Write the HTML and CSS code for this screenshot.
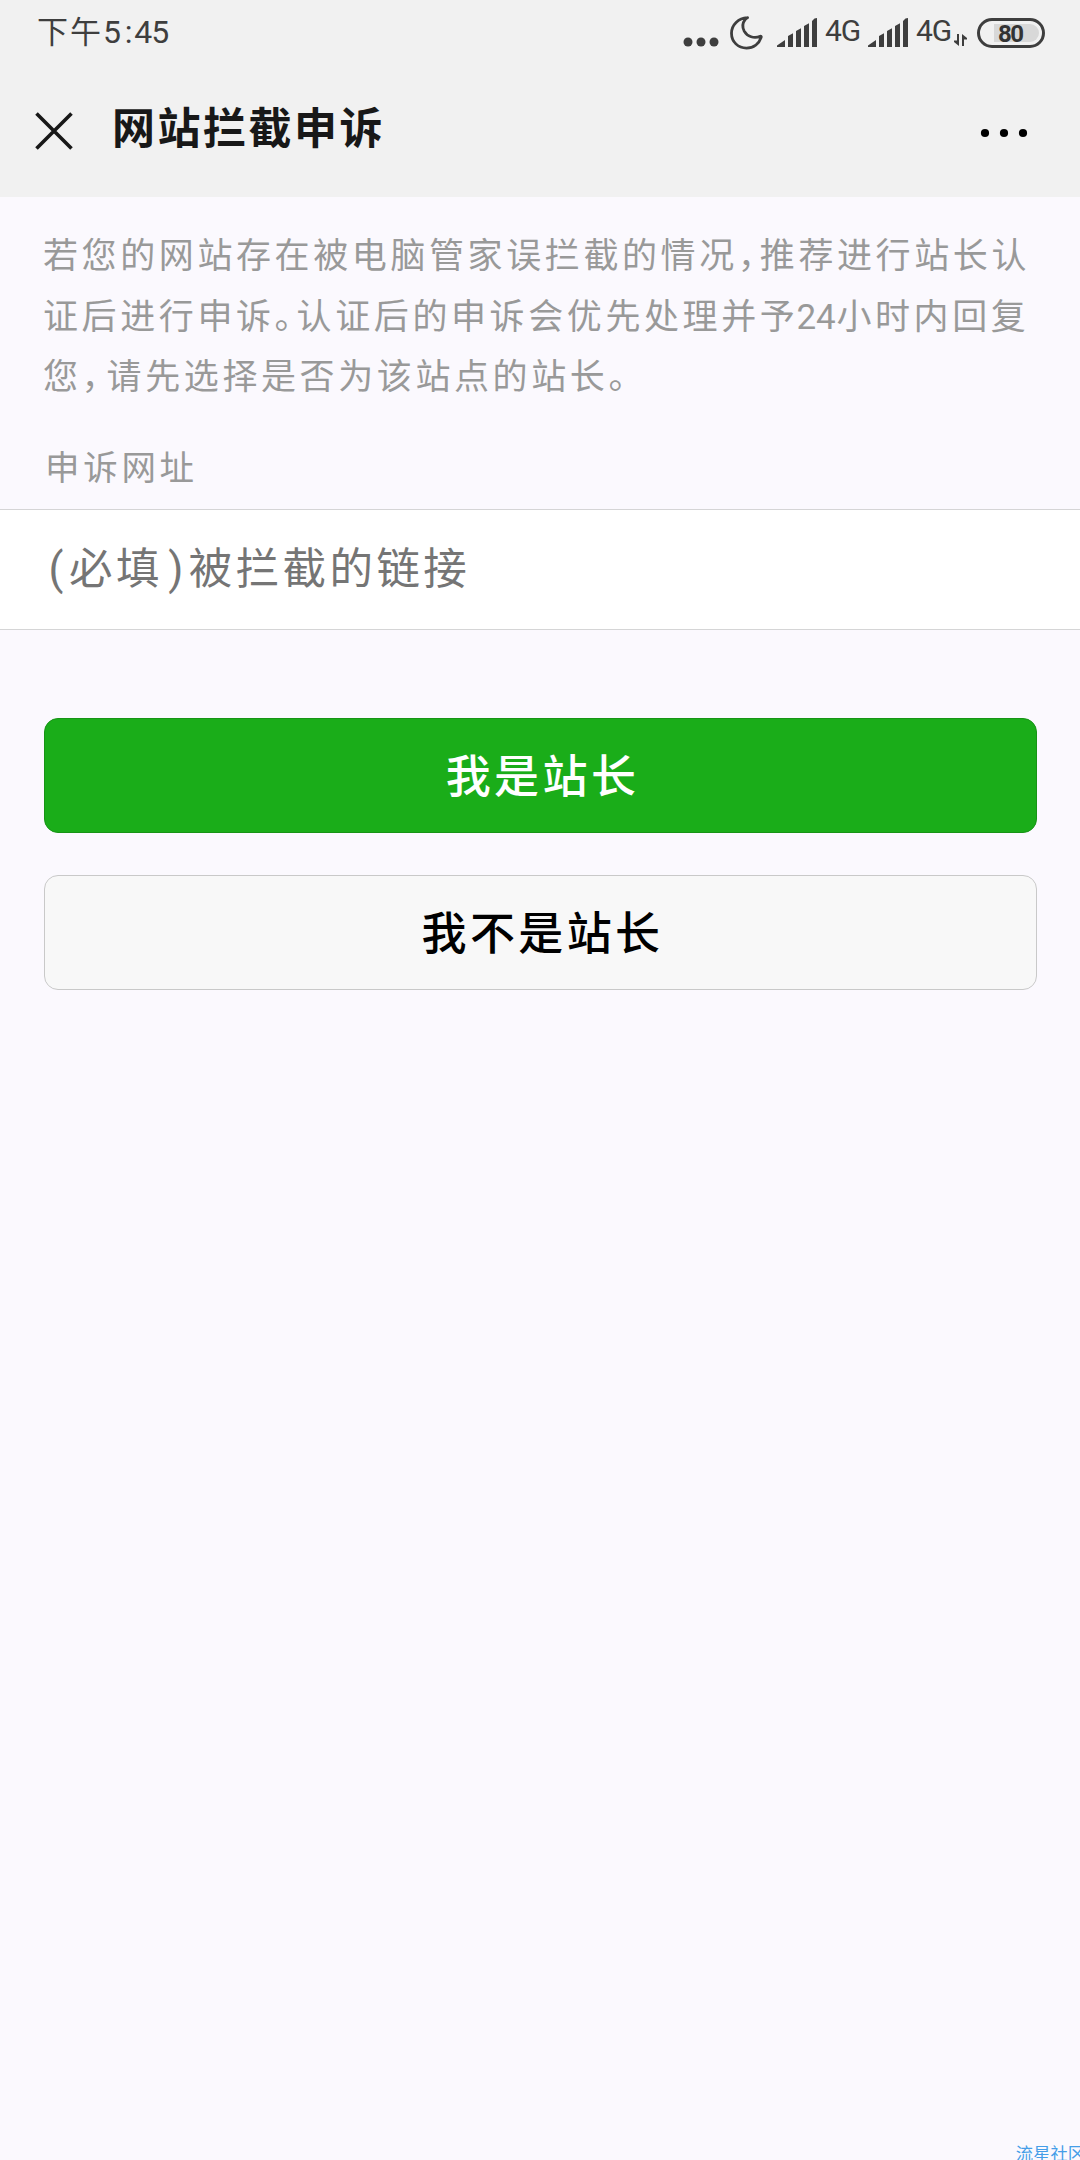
FILE: index.html
```html
<!DOCTYPE html>
<html lang="zh-CN">
<head>
    <meta charset="UTF-8">
    <title>网站拦截申诉</title>
    <link rel="stylesheet" href="styles.css">
</head>
<body>
    <header>
        <div class="status-bar">
            <div class="clock">下午<span class="clock-digits">5<span class="colon">:</span>45</span></div>
            <svg class="more" width="36" height="10" viewBox="0 0 36 10"><circle cx="5" cy="5" r="4.5"/><circle cx="18" cy="5" r="4.5"/><circle cx="31" cy="5" r="4.5"/></svg>
            <svg class="moon" width="34" height="34" viewBox="0 0 34 34"><path d="M17.300 1.600C8.500 2 1.500 8.800 1.500 17.200c0 8.600 6.600 14.900 15 14.900 7 0 12.600-4.300 14.700-10.800.3-1-.2-1.200-1-.9-6.200 2.400-12.800.4-16-5.300-2-3.800-1.600-8.200.9-11.400 1.300-1.600 3.200-2.200 2.200-2.100z"/></svg>
            <svg class="signal" width="40" height="29" viewBox="0 0 40 29"><path d="M0 29v-1.500l8-5.500v7zM11 29V18l5-2.800V29zM19 29V13l5-2.800V29zM27 29V8l5-2.800V29zM35 29V3l2.500-2.500L40 0v29z"/></svg>
            <span class="network">4G</span>
            <svg class="signal signal-second" width="40" height="29" viewBox="0 0 40 29"><path d="M0 29v-1.500l8-5.500v7zM11 29V18l5-2.800V29zM19 29V13l5-2.800V29zM27 29V8l5-2.800V29zM35 29V3l2.500-2.500L40 0v29z"/></svg>
            <span class="network">4G</span>
            <svg class="transfer" width="13" height="12" viewBox="0 0 13 12"><path d="M3 0h2v12L0 8v-1.500h3zM8 12h2V5.500h3V4L8 0z"/></svg>
            <div class="battery"><span class="battery-level">80</span></div>
        </div>
        <div class="nav-bar">
            <svg class="close" width="38" height="38" viewBox="0 0 38 38"><path d="M1.500 1.500l35 35M36.500 1.500l-35 35"/></svg>
            <h1>网站拦截申诉</h1>
            <svg class="menu" width="48" height="10" viewBox="0 0 48 10"><circle cx="5" cy="5" r="4.100"/><circle cx="24" cy="5" r="4.100"/><circle cx="43" cy="5" r="4.100"/></svg>
        </div>
    </header>

    <main>
        <p class="tips">若您的网站存在被电脑管家误拦截的情况<span class="mark">，</span>推荐进行站长认<br>证后进行申诉<span class="mark">。</span>认证后的申诉会优先处理并予<span class="number">24</span>小时内回复<br>您<span class="mark mark-wide">，</span>请先选择是否为该站点的站长。</p>
        <div class="field-label">申诉网址</div>
        <div class="field" role="textbox" tabindex="0">
            <span class="paren">(</span>必填<span class="paren">)</span>被拦截的链接
        </div>
        <div class="buttons">
            <button class="button button-primary">我是站长</button>
            <button class="button button-default">我不是站长</button>
        </div>
    </main>

    <div class="watermark">流星社区</div>
</body>
</html>
```

FILE: styles.css
```css
:root {
    --bar-color: #f1f1f1;
    --page-color: #fbf9fe;
    --status-color: #3e3e3e;
    --hint-color: #999;
    --line-color: #d5d5d6;
    --primary-color: #1aad19;
}

* {
    box-sizing: border-box;
}

body {
    position: relative;
    height: 2160px;
    margin: 0;
    overflow: hidden;
    background-color: var(--page-color);
    font-family: Roboto, "Noto Sans CJK SC", sans-serif;
}

svg {
    display: block;
    flex: none;
}

header {
    height: 197px;
    background-color: var(--bar-color);
}

/* Status bar */
.status-bar {
    display: flex;
    align-items: center;
    height: 65px;
    padding: 0 35px 0 37px;
    color: var(--status-color);
    fill: var(--status-color);
}

.clock {
    margin-right: auto;
    margin-top: -1px;
    font-size: 31px;
    letter-spacing: 2px;
    line-height: 62px;
    white-space: nowrap;
}

.clock-digits {
    font-size: 32px;
    letter-spacing: -1.2px;
}

.colon {
    margin: 0 3px 0 5px;
}

.more {
    margin-top: 19px;
}

.moon {
    margin-left: 11px;
    fill: none;
    stroke: var(--status-color);
    stroke-width: 2.8;
}

.signal {
    margin-left: 13px;
}

.signal-second {
    margin-left: 7px;
}

.network {
    width: 36px;
    margin-left: 8px;
    font-size: 30px;
    line-height: 62px;
    letter-spacing: -1px;
    margin-top: -3px;
}

.transfer {
    margin: 14px 10px 0 2px;
}

.battery {
    width: 68px;
    height: 30px;
    padding: 3px;
    border: 3px solid var(--status-color);
    border-radius: 15px;
}

.battery-level {
    display: block;
    width: 45px;
    height: 18px;
    margin-left: 11px;
    padding-left: 4px;
    border-radius: 0 9px 9px 0;
    background-color: #d8d8d8;
    color: #333;
    font-size: 24px;
    font-weight: bold;
    line-height: 20px;
    letter-spacing: -1.5px;
}

/* Title bar */
.nav-bar {
    display: flex;
    align-items: center;
    height: 132px;
    padding: 0 52px 0 35px;
    color: #181818;
}

.close {
    fill: none;
    stroke: #181818;
    stroke-width: 3.6;
}

h1 {
    flex: 1;
    margin: -4px 0 0 39px;
    font-size: 43px;
    font-weight: bold;
    letter-spacing: 2.5px;
    line-height: 64px;
}

.menu {
    margin-top: 3px;
}

/* Form */
.tips {
    margin: 0;
    padding: 30px 0 0 43px;
    color: var(--hint-color);
    font-size: 35px;
    letter-spacing: 3.6px;
    line-height: 60.5px;
    white-space: nowrap;
}

/* Half-width punctuation */
.mark {
    display: inline-block;
    width: 22px;
    font-feature-settings: "halt";
}

.mark-wide {
    width: 25px;
}

.number {
    display: inline-block;
    width: 41px;
    margin-left: -2px;
    margin-right: -1px;
    letter-spacing: 0;
}

.field-label {
    padding: 31px 45px 0;
    color: var(--hint-color);
    font-size: 34.5px;
    letter-spacing: 3.7px;
    line-height: 56px;
}

.field {
    height: 121px;
    margin-top: 13.5px;
    padding: 0 43px;
    border: solid var(--line-color);
    border-width: 1px 0;
    background-color: #fff;
    color: #757575;
    font-size: 43.5px;
    letter-spacing: 3.4px;
    line-height: 119px;
}

.paren {
    display: inline-block;
    width: 26px;
    letter-spacing: 0;
    text-align: center;
}

.buttons {
    display: grid;
    gap: 42px;
    padding: 88px 43px 0 44px;
}

.button {
    height: 115px;
    padding: 0 0 5px 4px;
    border: 1px solid #c9c9c9;
    border-radius: 14px;
    font: 500 45px/1 "Noto Sans CJK SC", sans-serif;
    letter-spacing: 3.4px;
}

.button-primary {
    border-color: #179416;
    background-color: var(--primary-color);
    color: #fff;
}

.button-default {
    background-color: #f8f8f8;
    color: #000;
}

/* Watermark in the corner, runs off the page */
.watermark {
    position: absolute;
    right: -5px;
    bottom: -6px;
    color: #459ee8;
    font-size: 17.3px;
    line-height: 24px;
    white-space: nowrap;
}
```
